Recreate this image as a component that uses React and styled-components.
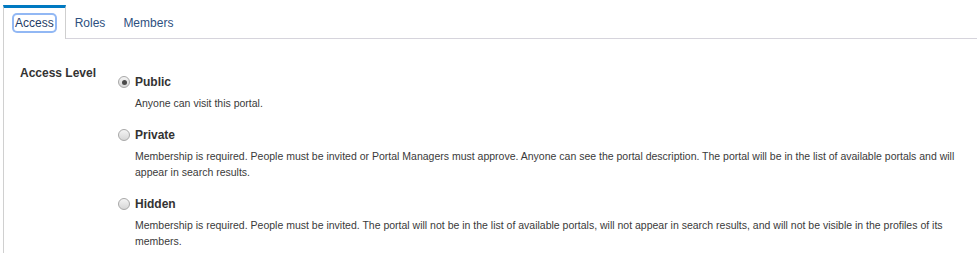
import React, { useState } from 'react';
import styled, { createGlobalStyle } from 'styled-components';

const GlobalStyle = createGlobalStyle`
  body {
    margin: 0;
    background: #fff;
    font-family: "Liberation Sans", Arial, sans-serif;
  }
`;

const Page = styled.div`
  padding: 5px 0 0 3px;
  width: 974px;
  height: 248px;
  overflow: hidden;
`;

const TabBar = styled.div`
  display: flex;
  height: 33px;
  border-bottom: 1px solid #d6d4dc;
`;

const Tab = styled.div`
  box-sizing: border-box;
  height: ${p => (p.$active ? '34px' : '33px')};
  margin-bottom: ${p => (p.$active ? '-1px' : '0')};
  padding: 0 ${p => (p.$active ? '10px' : '9px')};
  border-top: 3px solid ${p => (p.$active ? '#0079c1' : 'transparent')};
  border-left: ${p => (p.$active ? '1px solid #cfcfcf' : 'none')};
  border-right: ${p => (p.$active ? '1px solid #cfcfcf' : 'none')};
  background: #fff;
  font-size: 12px;
  line-height: 30px;
  color: ${p => (p.$active ? '#1f3c66' : '#2d4f80')};
  cursor: pointer;
`;

const FocusRing = styled.span`
  padding: 1px 1px;
  border-radius: 3px;
  box-shadow: 0 0 0 2px rgba(110, 160, 240, 0.75);
`;

const Panel = styled.div`
  border-left: 1px solid #d0d0d0;
  padding: 25px 7px 0 16px;
  height: 215px;
`;

const Row = styled.div`
  display: flex;
`;

const Label = styled.div`
  width: 98px;
  flex-shrink: 0;
  font-size: 12px;
  font-weight: bold;
  line-height: 18px;
  color: #333;
`;

const Options = styled.div`
  flex: 1;
  padding-top: 9px;
`;

const Option = styled.div`
  & + & {
    margin-top: 15px;
  }
`;

const Title = styled.label`
  display: flex;
  align-items: center;
  gap: 5px;
  height: 18px;
  font-size: 12px;
  font-weight: bold;
  color: #333;
  cursor: pointer;
`;

const Radio = styled.input`
  appearance: none;
  margin: 0;
  width: 12px;
  height: 12px;
  border-radius: 50%;
  border: 1px solid #a8a8a8;
  background: linear-gradient(#f4f4f4, #d6d6d6);
  display: grid;
  place-items: center;
  &:checked::after {
    content: '';
    width: 5px;
    height: 5px;
    border-radius: 50%;
    background: #4a4a4a;
  }
`;

const Desc = styled.p`
  margin: 4px 0 0 17px;
  font-size: 10.5px;
  line-height: 16px;
  color: #3a3a3a;
`;

const levels = [
  { id: 'public', title: 'Public', desc: 'Anyone can visit this portal.' },
  {
    id: 'private',
    title: 'Private',
    desc: 'Membership is required. People must be invited or Portal Managers must approve. Anyone can see the portal description. The portal will be in the list of available portals and will appear in search results.',
  },
  {
    id: 'hidden',
    title: 'Hidden',
    desc: 'Membership is required. People must be invited. The portal will not be in the list of available portals, will not appear in search results, and will not be visible in the profiles of its members.',
  },
];

const App = () => {
  const [level, setLevel] = useState('public');
  return (
    <Page>
      <GlobalStyle />
      <TabBar>
        <Tab $active><FocusRing>Access</FocusRing></Tab>
        <Tab>Roles</Tab>
        <Tab>Members</Tab>
      </TabBar>
      <Panel>
        <Row>
          <Label>Access Level</Label>
          <Options>
            {levels.map(l => (
              <Option key={l.id}>
                <Title>
                  <Radio
                    type="radio"
                    name="access"
                    checked={level === l.id}
                    onChange={() => setLevel(l.id)}
                  />
                  {l.title}
                </Title>
                <Desc>{l.desc}</Desc>
              </Option>
            ))}
          </Options>
        </Row>
      </Panel>
    </Page>
  );
};

export default App;
